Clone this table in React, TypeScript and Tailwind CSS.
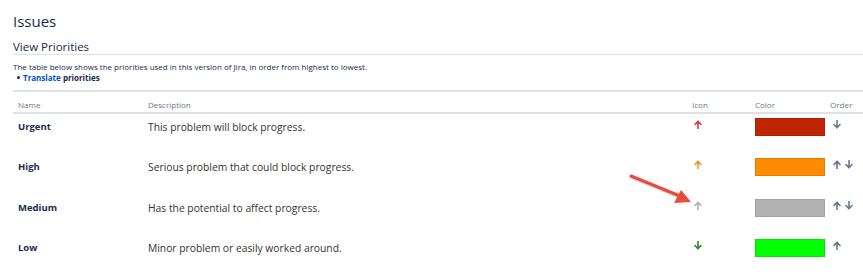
import React from 'react';

type Priority = {
  name: string;
  description: string;
  iconColor: string;
  dir: 'up' | 'down';
  color: string;
  up: boolean;
  down: boolean;
};

const priorities: Priority[] = [
  { name: 'Urgent', description: 'This problem will block progress.', iconColor: '#d04437', dir: 'up', color: '#bf2600', up: false, down: true },
  { name: 'High', description: 'Serious problem that could block progress.', iconColor: '#f79232', dir: 'up', color: '#ff8b00', up: true, down: true },
  { name: 'Medium', description: 'Has the potential to affect progress.', iconColor: '#b3b3b3', dir: 'up', color: '#b3b3b3', up: true, down: true },
  { name: 'Low', description: 'Minor problem or easily worked around.', iconColor: '#2a8735', dir: 'down', color: '#00ff00', up: true, down: false },
];

function Arrow({ dir, color, size = 8 }: { dir: 'up' | 'down'; color: string; size?: number }) {
  return (
    <svg width={size} height={size + 1} viewBox="0 0 8 9" className={dir === 'down' ? 'rotate-180' : ''}>
      <path d="M4 8.5V1.5M1 4.5L4 1.2L7 4.5" fill="none" stroke={color} strokeWidth="1.6" strokeLinecap="round" strokeLinejoin="round" />
    </svg>
  );
}

export default function App() {
  return (
    <div className="relative w-[863px] h-[272px] bg-white overflow-hidden pl-[13px] text-[#172b4d]" style={{ fontFamily: '"Open Sans", "Noto Sans", sans-serif' }}>
      <h1 className="pt-[10px] text-[15px] leading-[22px] font-medium text-[#172b4d]">Issues</h1>
      <h2 className="mt-[8px] text-[11.5px] leading-[14px] font-medium text-[#172b4d] border-b border-[#dfe1e6]">View Priorities</h2>
      <p className="mt-[6px] text-[8px] leading-[11px] text-[#172b4d]">
        The table below shows the priorities used in this version of Jira, in order from highest to lowest.
      </p>
      <ul className="text-[8px] leading-[11px] pl-[4px]">
        <li className="flex items-center gap-[3px]">
          <span className="inline-block w-[3px] h-[3px] rounded-full bg-[#172b4d]" />
          <span className="font-bold">
            <span className="text-[#0052cc]">Translate</span> priorities
          </span>
        </li>
      </ul>
      <div className="mt-[7px] border-t-2 border-[#dfe1e6]">
        <div className="grid grid-cols-[130px_544px_63px_75px_1fr] pl-[5px] h-[22px] pt-[6px] items-center border-b-2 border-[#dfe1e6] text-[8px] leading-[12px] text-[#6b778c]">
          <span>Name</span>
          <span>Description</span>
          <span>Icon</span>
          <span>Color</span>
          <span>Order</span>
        </div>
        {priorities.map((p) => (
          <div key={p.name} className="grid grid-cols-[130px_544px_63px_75px_1fr] pl-[5px] h-[40.3px] pt-[4px] items-start leading-[18px]">
            <span className="font-bold text-[#172b4d] text-[9.5px]">{p.name}</span>
            <span className="text-[#333] text-[10.3px]">{p.description}</span>
            <span className="pl-[2px] pt-[2px]">
              <Arrow dir={p.dir} color={p.iconColor} />
            </span>
            <span>
              <span className="block w-[70px] h-[18px] border border-black/10" style={{ backgroundColor: p.color }} />
            </span>
            <span className="flex gap-[4px] pl-[3px] pt-[2px]">
              {p.up && <Arrow dir="up" color="#6b778c" />}
              {p.down && <Arrow dir="down" color="#6b778c" />}
            </span>
          </div>
        ))}
      </div>
      <svg className="absolute left-[620px] top-[165px]" width="80" height="45" viewBox="0 0 80 45">
        <line x1="11" y1="12" x2="60" y2="32" stroke="#b02a1e" strokeOpacity="0.25" strokeWidth="3" strokeLinecap="round" />
        <line x1="11" y1="11" x2="60" y2="31" stroke="#e84c3d" strokeWidth="3" strokeLinecap="round" />
        <path d="M71 37 L54 38 L61 25 Z" fill="#e84c3d" />
      </svg>
    </div>
  );
}
